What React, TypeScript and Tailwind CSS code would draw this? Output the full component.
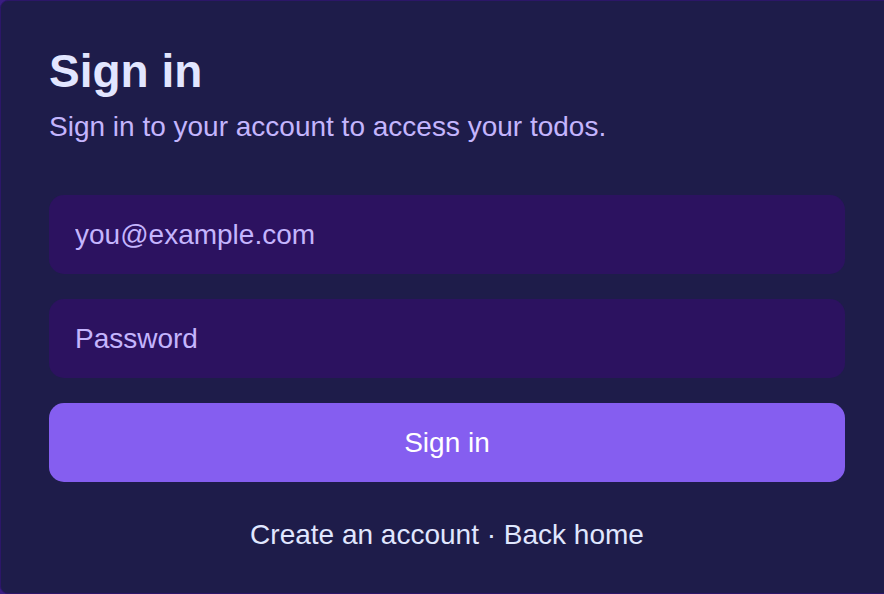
export default function App() {
  return (
    <div className="w-[884px] h-[594px] overflow-hidden bg-[#3a1d82] font-['Liberation_Sans',Arial,sans-serif]">
      <div className="w-[894px] h-[594px] rounded-lg border border-[#2c1668] bg-[#1e1c4a] pl-[48px] pr-[48px] pt-[42px]">
        <h1 className="text-[46px] leading-[56px] font-bold text-[#e2e6ff]">Sign in</h1>
        <p className="mt-[10px] text-[28px] leading-[36px] text-[#c4b5fd]">
          Sign in to your account to access your todos.
        </p>
        <form className="mt-[50px] flex flex-col gap-[25px]">
          <input
            type="email"
            placeholder="you@example.com"
            className="h-[79px] w-[796px] rounded-[15px] bg-[#2c1260] px-[26px] text-[28px] text-[#e0e7ff] placeholder:text-[#c4b5fd] outline-none"
          />
          <input
            type="password"
            placeholder="Password"
            className="h-[79px] w-[796px] rounded-[15px] bg-[#2c1260] px-[26px] text-[28px] text-[#e0e7ff] placeholder:text-[#c4b5fd] outline-none"
          />
          <button
            type="button"
            className="h-[79px] w-[796px] rounded-[15px] bg-[#855ef0] text-[28px] text-white"
          >
            Sign in
          </button>
        </form>
        <div className="mt-[35px] w-[796px] text-center text-[28px] leading-[36px] text-[#e0e7ff]">
          <a href="#">Create an account</a>
          <span> · </span>
          <a href="#">Back home</a>
        </div>
      </div>
    </div>
  );
}
